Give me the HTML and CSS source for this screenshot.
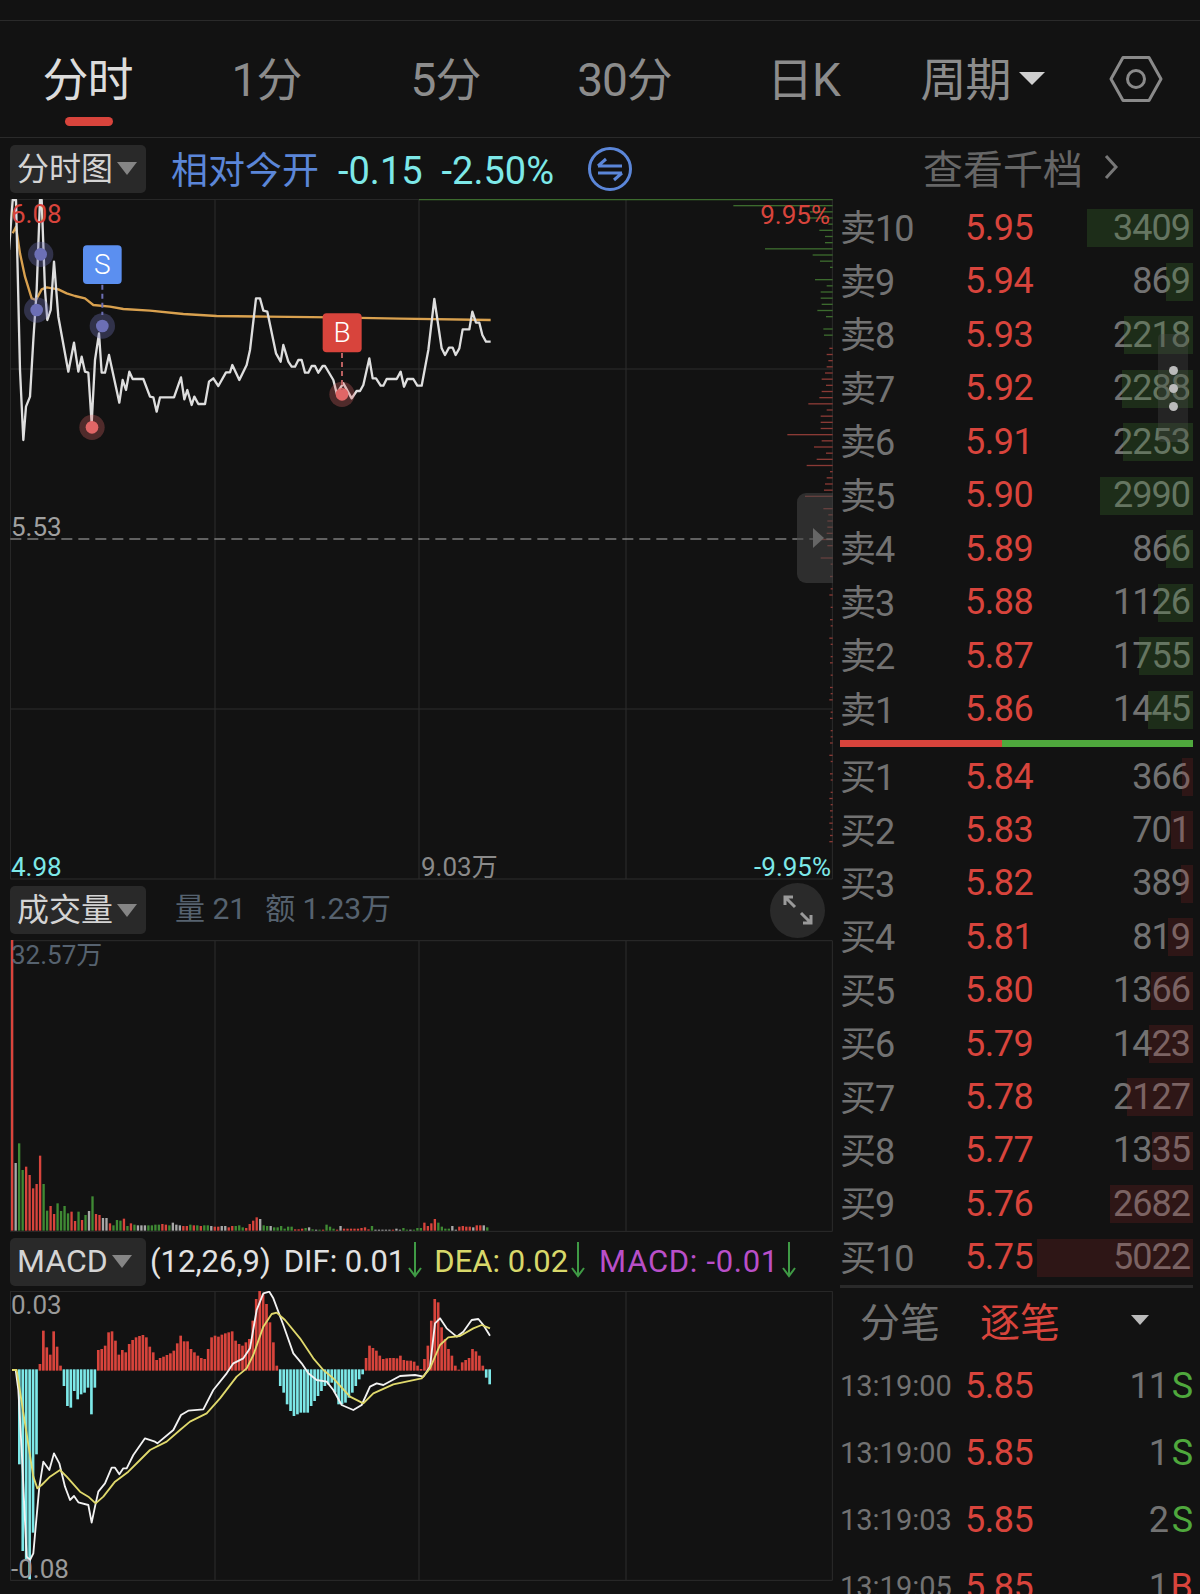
FILE: index.html
```html
<!DOCTYPE html>
<html lang="zh-CN">
<head>
    <meta charset="UTF-8">
    <meta name="viewport" content="width=device-width, initial-scale=1.0">
    <title>分时</title>
    <link rel="stylesheet" href="styles.css">
</head>
<body>
    <div class="status"></div>

    <!-- Period tabs -->
    <nav class="tabs">
        <a class="tab active">分时</a>
        <a class="tab">1分</a>
        <a class="tab">5分</a>
        <a class="tab">30分</a>
        <a class="tab">日K</a>
        <a class="tab">周期<i class="tab-caret"></i></a>
        <a class="tab-icon">
            <svg width="54" height="48" viewBox="0 0 54 48" fill="none" stroke="#8a8a8a" stroke-width="3" stroke-linejoin="round">
                <path d="M2 24 14 2.500H40L52 24 40 45.500H14Z"/>
                <circle cx="27" cy="24" r="8.500"/>
            </svg>
        </a>
    </nav>

    <div class="main">
        <div class="left">
            <!-- Price chart -->
            <div class="toolbar">
                <div class="picker">分时图<i class="caret"></i></div>
                <span class="basis">相对今开</span>
                <span class="change">-0.15</span>
                <span class="change">-2.50%</span>
                <svg class="swap" width="46" height="46" viewBox="0 0 46 46" fill="none" stroke="#5b86d8" stroke-width="3">
                    <circle cx="23" cy="23" r="20.500"/>
                    <path d="M11 20H35M11 20 19 13"/>
                    <path d="M11 27H35M35 27 27 34"/>
                </svg>
            </div>
            <div class="chart">
                <svg class="plot" width="823" height="681" viewBox="30 27 2469 2043">
                    <path class="grid" d="M31 28V2067H2497V28ZM645 28V2067M1257 28V2067M1878 28V2067M31 537H2497M31 1557H2497"/>
                    <g id="depth"></g>
                    <path d="M1257 28H2498" stroke="#3c6b2e" stroke-width="5"/>
                    <path d="M31 1047H2498" stroke="#b0b0b0" stroke-width="3" stroke-dasharray="33 18"/>
                    <polyline class="line" stroke="#d9a14f" stroke-width="7" points="38,130 48,110 60,190 75,260 95,325 108,330 125,298 140,292 175,298 200,310 225,318 255,325 280,345 330,350 370,357 450,362 550,372 650,378 800,380 1000,382 1200,386 1472,390"/>
                    <polyline class="line" stroke="#dedede" stroke-width="7" points="27,180 38,30 48,30 60,540 70,750 78,650 90,620 100,450 110,300 120,30 125,30 135,300 142,390 152,360 162,215 175,380 205,545 222,458 235,545 245,500 255,545 265,548 275,700 285,510 297,430 305,548 315,548 327,495 358,638 368,570 378,600 388,545 398,567 430,567 450,620 460,622 470,665 480,622 522,622 543,562 553,628 562,600 575,645 583,620 595,642 615,642 627,575 640,565 655,588 678,547 690,547 697,525 718,570 740,525 750,480 768,325 780,325 790,362 802,365 828,490 842,515 850,465 865,515 875,530 885,530 895,510 905,510 915,548 925,548 935,528 945,528 955,548 968,528 975,528 1000,570 1010,610 1030,580 1055,625 1070,603 1080,603 1090,585 1108,505 1118,565 1128,565 1142,587 1150,587 1160,567 1190,567 1202,545 1212,590 1222,567 1240,567 1252,587 1265,587 1285,480 1303,327 1325,475 1335,495 1347,473 1358,473 1367,495 1378,475 1388,418 1408,418 1417,365 1428,398 1438,398 1447,435 1458,455 1472,455"/>

                    <!-- Trade marks -->
                    <circle class="halo-s" cx="122" cy="193" r="38"/><circle class="dot-s" cx="122" cy="193" r="19"/>
                    <circle class="halo-s" cx="110" cy="360" r="38"/><circle class="dot-s" cx="110" cy="360" r="19"/>
                    <circle class="halo-s" cx="307" cy="408" r="38"/><circle class="dot-s" cx="307" cy="408" r="19"/>
                    <circle class="halo-b" cx="276" cy="712" r="38"/><circle class="dot-b" cx="276" cy="712" r="19"/>
                    <circle class="halo-b" cx="1026" cy="613" r="38"/><circle class="dot-b" cx="1026" cy="613" r="19"/>
                    <path d="M307 284V375" stroke="#6c6fb5" stroke-width="6" stroke-dasharray="15 12"/>
                    <path d="M1026 489V600" stroke="#b96060" stroke-width="6" stroke-dasharray="15 12"/>
                    <rect x="249" y="166" width="116" height="116" rx="12" fill="#5b8ff0"/>
                    <rect x="968" y="370" width="117" height="117" rx="12" fill="#d8443c"/>
                    <text class="mark" x="307" y="252">S</text>
                    <text class="mark" x="1026" y="456">B</text>
                </svg>
                <span class="tag up top-left">6.08</span>
                <span class="tag up top-right">9.95%</span>
                <span class="tag prev">5.53</span>
                <span class="tag down low-left">4.98</span>
                <span class="tag muted low-mid">9.03万</span>
                <span class="tag down low-right">-9.95%</span>
                <div class="panel-handle"><i></i></div>
            </div>

            <!-- Volume chart -->
            <div class="toolbar toolbar-vol">
                <div class="picker">成交量<i class="caret"></i></div>
                <span class="vol-info">量 21</span>
                <span class="vol-info">额 1.23万</span>
                <button class="expand">
                    <svg width="34" height="34" viewBox="0 0 34 34" fill="none" stroke="#9a9a9a" stroke-width="3">
                        <path d="M4 12V4H12M4 4 14 14"/>
                        <path d="M30 22V30H22M30 30 20 20"/>
                    </svg>
                </button>
            </div>
            <div class="chart">
                <svg class="plot" width="823" height="292" viewBox="30 -540 2469 876">
                    <path class="grid" d="M31 -538V334H2497V-538ZM645 -538V334M1257 -538V334M1878 -538V334"/>
                    <g id="volume"></g>
                </svg>
                <span class="tag vol-max">32.57万</span>
            </div>

            <!-- MACD chart -->
            <div class="toolbar toolbar-macd">
                <div class="picker">MACD<i class="caret"></i></div>
                <span class="macd-val macd-params">(12,26,9)</span>
                <span class="macd-val">DIF: 0.01</span>
                <svg class="arrow" width="14" height="36" viewBox="0 0 14 36" fill="none" stroke="#3f9a45" stroke-width="2"><path d="M7 0V34M1 26 7 34 13 26"/></svg>
                <span class="macd-val dea">DEA: 0.02</span>
                <svg class="arrow" width="14" height="36" viewBox="0 0 14 36" fill="none" stroke="#3f9a45" stroke-width="2"><path d="M7 0V34M1 26 7 34 13 26"/></svg>
                <span class="macd-val hist">MACD: -0.01</span>
                <svg class="arrow" width="14" height="36" viewBox="0 0 14 36" fill="none" stroke="#3f9a45" stroke-width="2"><path d="M7 0V34M1 26 7 34 13 26"/></svg>
            </div>
            <div class="chart">
                <svg class="plot" width="823" height="290" viewBox="30 3 2469 870">
                    <path class="grid" d="M31 4V871H2497V4ZM645 4V871M1257 4V871M1878 4V871"/>
                    <g id="macd"></g>
                    <polyline class="line" stroke="#f2f2f2" stroke-width="5.500" points="47,240 55,300 65,480 80,800 90,810 100,790 108,700 118,590 130,515 148,540 162,490 178,520 195,590 210,630 222,618 235,637 265,645 275,698 285,650 295,605 315,580 335,533 345,533 358,553 370,535 380,535 400,495 435,445 465,455 472,460 520,420 543,375 565,362 610,358 640,300 680,250 700,220 730,205 750,175 770,60 790,10 808,5 820,25 850,105 880,190 905,220 925,250 950,270 980,275 1000,300 1025,345 1060,360 1085,345 1110,290 1130,280 1150,285 1200,258 1245,255 1270,260 1290,230 1305,100 1320,85 1340,115 1370,140 1390,125 1415,90 1435,87 1450,105 1470,137"/>
                    <polyline class="line" stroke="#e0d96c" stroke-width="5.500" points="36,240 50,240 75,400 100,560 112,595 125,585 150,560 180,540 200,560 240,605 265,620 287,640 310,620 345,575 385,545 420,510 450,480 500,455 540,420 570,395 620,370 660,325 710,260 740,235 760,195 790,110 815,72 830,68 855,90 900,145 940,205 970,240 1000,265 1050,320 1090,340 1120,310 1180,283 1265,265 1290,235 1320,165 1345,142 1380,138 1420,115 1445,105 1470,115"/>
                </svg>
                <span class="tag gray macd-top">0.03</span>
                <span class="tag gray macd-low">-0.08</span>
            </div>
        </div>

        <div class="right">
            <div class="depth-link">查看千档
                <svg width="16" height="28" viewBox="0 0 16 28" fill="none" stroke="#777" stroke-width="3"><path d="M3 3 13 14 3 25"/></svg>
            </div>

            <!-- Order book -->
            <div class="book">
                <div class="row"><span class="lbl">卖10</span><span class="price">5.95</span><span class="qty">3409</span><i class="bar ask" style="width:106px"></i></div>
                <div class="row"><span class="lbl">卖9</span><span class="price">5.94</span><span class="qty">869</span><i class="bar ask" style="width:27px"></i></div>
                <div class="row"><span class="lbl">卖8</span><span class="price">5.93</span><span class="qty">2218</span><i class="bar ask" style="width:69px"></i></div>
                <div class="row"><span class="lbl">卖7</span><span class="price">5.92</span><span class="qty">2288</span><i class="bar ask" style="width:71px"></i></div>
                <div class="row"><span class="lbl">卖6</span><span class="price">5.91</span><span class="qty">2253</span><i class="bar ask" style="width:70px"></i></div>
                <div class="row"><span class="lbl">卖5</span><span class="price">5.90</span><span class="qty">2990</span><i class="bar ask" style="width:93px"></i></div>
                <div class="row"><span class="lbl">卖4</span><span class="price">5.89</span><span class="qty">866</span><i class="bar ask" style="width:27px"></i></div>
                <div class="row"><span class="lbl">卖3</span><span class="price">5.88</span><span class="qty">1126</span><i class="bar ask" style="width:35px"></i></div>
                <div class="row"><span class="lbl">卖2</span><span class="price">5.87</span><span class="qty">1755</span><i class="bar ask" style="width:54px"></i></div>
                <div class="row"><span class="lbl">卖1</span><span class="price">5.86</span><span class="qty">1445</span><i class="bar ask" style="width:45px"></i></div>
            </div>
            <div class="ratio"><i class="ratio-buy"></i><i class="ratio-sell"></i></div>
            <div class="book book-buy">
                <div class="row"><span class="lbl">买1</span><span class="price">5.84</span><span class="qty">366</span><i class="bar bid" style="width:11px"></i></div>
                <div class="row"><span class="lbl">买2</span><span class="price">5.83</span><span class="qty">701</span><i class="bar bid" style="width:22px"></i></div>
                <div class="row"><span class="lbl">买3</span><span class="price">5.82</span><span class="qty">389</span><i class="bar bid" style="width:12px"></i></div>
                <div class="row"><span class="lbl">买4</span><span class="price">5.81</span><span class="qty">819</span><i class="bar bid" style="width:25px"></i></div>
                <div class="row"><span class="lbl">买5</span><span class="price">5.80</span><span class="qty">1366</span><i class="bar bid" style="width:42px"></i></div>
                <div class="row"><span class="lbl">买6</span><span class="price">5.79</span><span class="qty">1423</span><i class="bar bid" style="width:44px"></i></div>
                <div class="row"><span class="lbl">买7</span><span class="price">5.78</span><span class="qty">2127</span><i class="bar bid" style="width:66px"></i></div>
                <div class="row"><span class="lbl">买8</span><span class="price">5.77</span><span class="qty">1335</span><i class="bar bid" style="width:41px"></i></div>
                <div class="row"><span class="lbl">买9</span><span class="price">5.76</span><span class="qty">2682</span><i class="bar bid" style="width:83px"></i></div>
                <div class="row"><span class="lbl">买10</span><span class="price">5.75</span><span class="qty">5022</span><i class="bar bid" style="width:156px"></i></div>
            </div>

            <!-- Trades -->
            <div class="trade-tabs">
                <span>分笔</span>
                <span class="trade-active">逐笔</span>
                <i class="trade-caret"></i>
            </div>
            <div class="trade"><span class="time">13:19:00</span><span class="price">5.85</span><span class="qty">11</span><span class="side sell">S</span></div>
            <div class="trade"><span class="time">13:19:00</span><span class="price">5.85</span><span class="qty">1</span><span class="side sell">S</span></div>
            <div class="trade"><span class="time">13:19:03</span><span class="price">5.85</span><span class="qty">2</span><span class="side sell">S</span></div>
            <div class="trade"><span class="time">13:19:05</span><span class="price">5.85</span><span class="qty">1</span><span class="side buy">B</span></div>

            <div class="scroll-handle"><i></i><i></i><i></i></div>
        </div>
    </div>

    <script src="script.js"></script>
</body>
</html>
```

FILE: styles.css
```css
* {
    margin: 0;
    padding: 0;
    box-sizing: border-box;
}

body {
    width: 1200px;
    height: 1594px;
    overflow: hidden;
    background: #121212;
    color: #8a8a8a;
    font-family: Roboto, "Noto Sans CJK SC", sans-serif;
}

.status {
    height: 21px;
    border-bottom: 1px solid #2a2a2a;
}

/* Period tabs */
.tabs {
    display: grid;
    grid-template-columns: repeat(6, 179px) 1fr;
    height: 117px;
    border-bottom: 1px solid #2a2a2a;
}

.tab {
    position: relative;
    display: flex;
    justify-content: center;
    align-items: center;
    height: 116px;
    padding-bottom: 6px;
    padding-right: 4px;
    font-size: 46px;
    letter-spacing: -1px;
    color: #8c8c8c;
}

.tab.active {
    color: #dcdcdc;
}

.tab.active::after {
    content: '';
    position: absolute;
    left: 65px;
    bottom: 11px;
    width: 48px;
    height: 9px;
    border-radius: 5px;
    background: #d8443c;
}

.tab-caret {
    margin-left: 8px;
    margin-top: 4px;
    border-left: 13px solid transparent;
    border-right: 13px solid transparent;
    border-top: 13px solid #cfcfcf;
}

.tab-icon {
    display: flex;
    justify-content: center;
    align-items: center;
    height: 116px;
    padding-right: 2px;
}

.main {
    display: flex;
}

.left {
    width: 823px;
    margin-left: 10px;
}

.right {
    position: relative;
    width: 353px;
    margin-left: 7px;
}

/* Chart toolbars */
.toolbar {
    display: flex;
    align-items: center;
    height: 61px;
}

.toolbar-vol {
    height: 60px;
}

.toolbar-macd {
    height: 59px;
}

.picker {
    display: flex;
    align-items: center;
    flex: none;
    width: 136px;
    height: 48px;
    padding-left: 7px;
    padding-bottom: 6px;
    border-radius: 5px;
    background: #292929;
    font-size: 32px;
    color: #d4d4d4;
}

.toolbar-macd .picker {
    padding-bottom: 2px;
}

.caret {
    margin-left: 4px;
    margin-top: 6px;
    border-left: 10px solid transparent;
    border-right: 10px solid transparent;
    border-top: 13px solid #858585;
}

.toolbar-macd .caret {
    margin-top: 2px;
}

.basis {
    margin-left: 25px;
    padding-bottom: 2px;
    font-size: 37px;
    color: #5b86d8;
}

.change {
    margin-left: 19px;
    padding-top: 4px;
    font-size: 38px;
    color: #7de8e8;
}

.swap {
    margin-left: 33px;
}

.vol-info {
    margin-left: 29px;
    padding-bottom: 9px;
    font-size: 30px;
    color: #56626f;
}

.vol-info + .vol-info {
    margin-left: 19px;
}

.expand {
    display: flex;
    justify-content: center;
    align-items: center;
    width: 55px;
    height: 55px;
    margin-left: auto;
    margin-right: 8px;
    border: none;
    border-radius: 50%;
    background: #2a2a2a;
}

.macd-val {
    margin-left: 13px;
    font-size: 31px;
    white-space: nowrap;
    color: #e2e2e2;
}

.macd-params {
    margin-left: 4px;
}

.dea {
    margin-left: 12px;
    color: #d8d86a;
}

.hist {
    margin-left: 14px;
    letter-spacing: 0.700px;
    color: #b94fc8;
}

.arrow {
    margin-left: 3px;
    margin-bottom: 4px;
}

/* Charts */
.chart {
    position: relative;
}

.plot {
    display: block;
}

.grid {
    fill: none;
    stroke: #2c2c2c;
    stroke-width: 3;
}

.line {
    fill: none;
    stroke-linejoin: round;
}

.halo-s {
    fill: rgba(108, 111, 181, 0.35);
}

.dot-s {
    fill: #6c6fb5;
}

.halo-b {
    fill: rgba(224, 102, 102, 0.3);
}

.dot-b {
    fill: #e06666;
}

.mark {
    font-size: 84px;
    font-weight: 300;
    fill: #fff;
    text-anchor: middle;
}

.tag {
    position: absolute;
    font-size: 26px;
    line-height: 28px;
    white-space: nowrap;
}

.up {
    color: #d8443c;
}

.down {
    color: #7de8e8;
}

.muted {
    color: #8a8a8a;
}

.gray {
    color: #9a9a9a;
}

.top-left {
    left: 1px;
    top: 1px;
}

.top-right {
    right: 3px;
    top: 2px;
}

.prev {
    left: 1px;
    top: 314px;
    color: #a0a0a0;
}

.low-left {
    left: 1px;
    bottom: -1px;
}

.low-mid {
    left: 411px;
    bottom: -1px;
}

.low-right {
    right: 2px;
    bottom: -1px;
}

.vol-max {
    left: 1px;
    top: 1px;
    color: #56626f;
}

.macd-top {
    left: 1px;
    top: 0;
}

.macd-low {
    left: 1px;
    bottom: -2px;
}

.panel-handle {
    position: absolute;
    right: 0;
    top: 294px;
    display: flex;
    align-items: center;
    justify-content: center;
    width: 36px;
    height: 90px;
    border-radius: 9px 0 0 9px;
    background: rgba(70, 70, 70, 0.55);
}

.panel-handle i {
    margin-left: 6px;
    border-top: 10px solid transparent;
    border-bottom: 10px solid transparent;
    border-left: 11px solid #666;
}

/* Order book */
.depth-link {
    display: flex;
    align-items: center;
    gap: 20px;
    height: 62px;
    padding-left: 83px;
    padding-bottom: 4px;
    font-size: 40px;
    color: #666;
}

.row {
    position: relative;
    display: grid;
    grid-template-columns: 125px 1fr auto;
    align-items: center;
    height: 53.500px;
    padding-top: 2px;
    padding-right: 3px;
    line-height: 44px;
    color: #727272;
}

.book-buy .row {
    height: 53.400px;
}

.lbl {
    padding-top: 3px;
    font-size: 36px;
    letter-spacing: -1px;
}

.price {
    font-size: 36px;
    letter-spacing: -0.500px;
    color: #d8443c;
}

.qty {
    font-size: 36px;
    letter-spacing: -1px;
}

.bar {
    position: absolute;
    right: 0;
    top: 9px;
    height: 38px;
}

.ask {
    background: rgba(64, 128, 48, 0.25);
}

.bid {
    background: rgba(160, 40, 40, 0.2);
}

.ratio {
    display: flex;
    height: 7px;
    margin: 5px 0 2px;
}

.ratio-buy {
    width: 162px;
    background: #d8443c;
}

.ratio-sell {
    flex: 1;
    background: #4fa83d;
}

/* Trades */
.trade-tabs {
    display: flex;
    align-items: center;
    height: 67px;
    margin-top: 2px;
    padding: 0 44px 0 20px;
    border-top: 3px solid #2a2a2a;
    font-size: 40px;
    color: #727272;
}

.trade-active {
    margin-left: 40px;
    color: #d8443c;
}

.trade-caret {
    margin-left: auto;
    border-left: 9px solid transparent;
    border-right: 9px solid transparent;
    border-top: 10px solid #bbb;
}

.trade {
    display: grid;
    grid-template-columns: 125px 1fr auto 25px;
    align-items: center;
    height: 67.300px;
    color: #727272;
}

.time {
    font-size: 29px;
}

.side {
    justify-self: end;
    font-size: 36px;
}

.sell {
    color: #4fa83d;
}

.buy {
    color: #d8443c;
}

.scroll-handle {
    position: absolute;
    left: 318px;
    top: 196px;
    display: flex;
    flex-direction: column;
    align-items: center;
    justify-content: center;
    gap: 9px;
    width: 30px;
    height: 108px;
    border-radius: 4px;
    background: rgba(80, 80, 80, 0.3);
}

.scroll-handle i {
    width: 9px;
    height: 9px;
    border-radius: 50%;
    background: #bbb;
}
```

FILE: script.js
```js
const NS = 'http://www.w3.org/2000/svg';

function addBar(group, x, y, w, h, fill) {
    const r = document.createElementNS(NS, 'rect');
    r.setAttribute('x', x);
    r.setAttribute('y', y);
    r.setAttribute('width', w);
    r.setAttribute('height', h);
    r.setAttribute('fill', fill);
    group.appendChild(r);
}

// Order flow ticks on the right edge of the price chart: left end of each tick, 0 = none
const depthGreen = [100, 330, 320, 385, 358, 375, 375, 195, 338, 360, 390, 0, 345, 380, 362, 362, 365, 352, 378, 0, 370, 372];
const depthRed = [388, 380, 385, 380, 375, 365, 378, 365, 358, 325, 380, 362, 362, 362, 262, 365, 342, 378, 350, 320, 390, 380, 375, 372, 315, 0, 370, 385, 382, 382, 380, 345, 382, 0, 362,
    392, 0, 390, 0, 392, 388, 0, 392, 0, 390, 392, 0, 388, 392, 0, 392, 390, 0, 392, 0, 390, 392, 388, 0, 392, 390, 0, 392, 392, 390, 0, 388, 392, 0, 390, 392, 0, 392, 388, 392, 390, 392, 388, 392, 390, 388];

const depth = document.getElementById('depth');
depthGreen.forEach((left, i) => {
    if (left) addBar(depth, 2100 + left, 45 + i * 18.500, 398 - left, 4, '#3c6b2e');
});
depthRed.forEach((left, i) => {
    if (left) addBar(depth, 2100 + left, 473 + i * 18.500, 398 - left, 4, '#8a3a35');
});

// Volume: height and colour of each bar
const volumeBars = 'r873 w203 g262 g182 r192 r167 r127 r140 r225 g140 g60 r74 r50 g82 g59 g74 g52 r57 r29 g57 r32 g47 w59 g103 r50 r47 w38 w38 r22 g16 g32 g30 r36 g14 r22 g18 w16 w16 w16 g16 g16 g18 g18 r20 r18 g16 w24 w18 w16 r14 r14 g18 r16 g16 r14 g16 g16 w14 r12 r12 w14 w14 r10 r14 g14 g16 g10 r8 r20 r30 r40 w35 g16 g14 w14 g10 g10 g14 g6 g12 g12 r4 r4 r6 g8 w10 g4 w3 g3 r3 g18 g12 g6 r3 w14 r6 r6 r6 r6 r6 r8 r10 r4 g14 w3 w3 w3 w3 w3 r3 w6 w3 g8 g3 w3 g3 g8 g8 r24 r14 r22 r35 g24 g12 g6 g6 w14 w3 r12 r14 r12 r12 w10 r16 r16 w16 g10'.split(' ');
const colours = { r: '#d8443c', g: '#3f8a34', w: '#a8a8a8' };

const volume = document.getElementById('volume');
volumeBars.forEach((item, i) => {
    const h = Number(item.slice(1));
    addBar(volume, 33 + i * 10.480, 332 - h, 7, h, colours[item[0]]);
});

// MACD histogram: positive is red, negative is cyan
const macdBars = [-285, -545, -575, -630, -490, -255, 20, 120, 70, 48, 118, 72, 15, -50, -110, -115, -65, -90, -75, -70, -55, -135, -55,
    62, 65, 75, 115, 118, 90, 48, 62, 55, 80, 92, 100, 104, 107, 100, 72, 55, 32, 38, 42, 47, 52, 60, 82, 105, 88, 88, 65, 55, 45, 38, 35, 65, 100, 105, 102, 108, 112, 115, 118, 90, 80, 75, 85, 95, 150, 215, 240, 230, 200, 145, 85, 15,
    -50, -70, -105, -125, -140, -135, -130, -130, -130, -110, -95, -80, -65, -50, -45, -40, -70, -105, -105, -100, -85, -70, -50, -30, -15,
    38, 75, 68, 60, 45, 35, 37, 38, 38, 37, 45, 32, 30, 30, 27, 15, 5, 35, 75, 150, 215, 205, 130, 95, 65, 45, 15, 3, 25, 32, 38, 65, 58, 45, 15, -25, -45];

const macd = document.getElementById('macd');
const pitch = (1468 - 57) / (macdBars.length - 1);
macdBars.forEach((v, i) => {
    const x = 54 + i * pitch;
    if (v > 0) addBar(macd, x, 242 - v, 8, v, '#d8443c');
    else addBar(macd, x, 238, 8, -v, '#7de8e8');
});
```
